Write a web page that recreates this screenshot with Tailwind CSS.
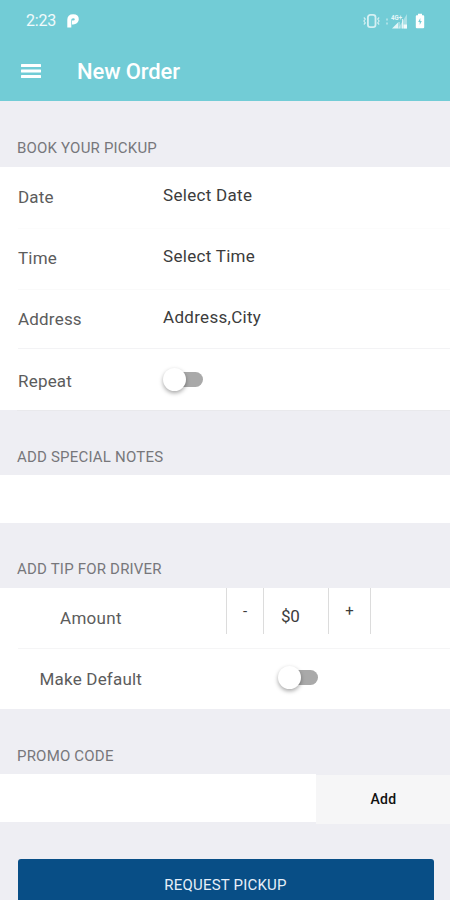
<!DOCTYPE html>
<html lang="en">
<head>
<meta charset="utf-8">
<title>New Order</title>
<script src="https://cdn.jsdelivr.net/npm/@tailwindcss/browser@4"></script>
</head>
<body class="h-[900px] w-[450px] overflow-hidden bg-[#eeeef3] font-['Roboto',sans-serif] text-[17px] leading-5 text-[#5c5c5c]">
<div class="flex h-[900px] flex-col overflow-hidden">
  <header class="h-[101px] shrink-0 bg-[#72ccd6] text-white">
    <div class="flex h-[41px] items-center pl-[26px] pr-[25px]">
      <span class="w-[41px] pt-px text-base tracking-[-0.2px] text-white/90">2:23</span>
      <svg class="h-[14px] w-[12px]" viewBox="0 0 12 14" fill="none"><path d="M2.300 13.500V5.800C2.300 3.400 4 2.200 6.200 2.200s3.600 1.200 3.600 3-1.500 3.200-3.600 3.200H5" stroke="#fff" stroke-width="4"/></svg>
      <div class="ml-auto flex items-center">
        <svg class="h-[16px] w-[17px]" viewBox="0 0 17 16" fill="none" stroke="#fff" stroke-opacity=".7"><rect x="4.900" y="1.900" width="7.600" height="12.200" rx="2.400" stroke-width="1.800"/><path d="M.8 4.500 2.300 6 .9 8l1.400 2L.8 11.500M16.200 4.500 14.700 6l1.400 2-1.400 2 1.500 1.500" stroke-width="1.100"/></svg>
        <svg class="ml-[3px] h-[16px] w-[26px]" viewBox="0 0 26 16"><path d="M3 5.500h2v2H3zM3 9.500h2v2H3z" fill="#fff" opacity=".4"/><path d="M9 15.500h6V9.500z" fill="#fff" opacity=".8"/><path d="M15 15.500h9V1z" fill="#fff" opacity=".4"/><path d="M16 15.500V9M19.500 15.500V6" stroke="#fff" stroke-opacity=".7"/><path d="M20.500 11.500h3.500v4h-3.500z" fill="#fff" opacity=".85"/><text x="8" y="6.500" font-size="7" font-weight="700" fill="#fff" fill-opacity=".85" textLength="11" lengthAdjust="spacingAndGlyphs">4G+</text></svg>
        <svg class="ml-[6px] h-[16px] w-[10px]" viewBox="0 0 10 16"><path d="M3 .8h4v1.400h1.200q1 0 1 1V14.200q0 1-1 1H1.800q-1 0-1-1V3.200q0-1 1-1H3z" fill="#fff"/><path d="M5.300 5 3.200 9h1.500v3L6.800 8H5.300z" fill="#72ccd6"/></svg>
      </div>
    </div>
    <div class="flex h-[60px] items-center pl-[21px]">
      <svg class="h-[16px] w-[20px]" viewBox="0 0 20 16" fill="#fff"><rect y="1" width="20" height="3" rx=".5"/><rect y="6.600" width="20" height="3" rx=".5"/><rect y="12.100" width="20" height="3" rx=".5"/></svg>
      <h1 class="ml-9 pt-px text-[22px] leading-[26px] font-medium tracking-[-0.1px]">New Order</h1>
    </div>
  </header>

  <h2 class="h-[66px] shrink-0 pt-[37px] pl-[17px] text-[15px] tracking-[0.2px] text-[#77777b]">BOOK YOUR PICKUP</h2>
  <section class="h-[243px] shrink-0 bg-white pl-[18px]">
    <div class="flex h-[62px] border-b border-[#fcfcfc] pt-[20px]"><span class="w-[145px] tracking-[0.2px]">Date</span><span class="-mt-0.5 tracking-[0.3px] text-[#3c3c3c]">Select Date</span></div>
    <div class="flex h-[61px] border-b border-[#fafafa] pt-[19px]"><span class="w-[145px] tracking-[0.2px]">Time</span><span class="-mt-0.5 tracking-[0.3px] text-[#3c3c3c]">Select Time</span></div>
    <div class="flex h-[59px] border-b border-[#f3f3f5] pt-[19px]"><span class="w-[145px] tracking-[0.2px]">Address</span><span class="-mt-0.5 tracking-[0.3px] text-[#3c3c3c]">Address,City</span></div>
    <div class="flex h-[61px] pt-[22px]"><span class="w-[145px] tracking-[0.2px]">Repeat</span>
      <div class="-mt-1 flex h-6 w-10 items-center"><span class="z-10 size-[23px] shrink-0 rounded-full bg-white shadow-[0_2px_4px_rgba(0,0,0,0.35)]"></span><span class="-ml-3 h-[15px] w-[29px] rounded-full bg-[#a9a9a9]"></span></div>
    </div>
  </section>

  <h2 class="h-[65px] shrink-0 pl-[17px] text-[15px] tracking-[0.2px] text-[#77777b]"><span class="block h-px bg-[#e9e9ec]"></span><span class="block pt-[36px]">ADD SPECIAL NOTES</span></h2>
  <section class="h-[48px] shrink-0 bg-white"></section>

  <h2 class="h-[65px] shrink-0 pt-[36px] pl-[17px] text-[15px] tracking-[0.2px] text-[#77777b]">ADD TIP FOR DRIVER</h2>
  <section class="h-[121px] shrink-0 bg-white pl-[18px]">
    <div class="flex h-[61px] border-b border-[#f5f5f6] pl-[42px]">
      <span class="w-[166px] pt-[20px] tracking-[0.3px]">Amount</span>
      <div class="flex h-[46px] text-[#3c3c3c]">
        <span class="w-[38px] border-x border-[#dcdcdc] pt-[13px] text-center text-[15px]">-</span>
        <span class="w-[64px] pt-[18px] pl-[17px] tracking-[-0.3px]">$0</span>
        <span class="w-[43px] border-x border-[#dcdcdc] pt-[13px] text-center text-[15px]">+</span>
      </div>
    </div>
    <div class="flex pl-[21.5px]"><span class="w-[238.5px] pt-[20px] tracking-[0.2px]">Make Default</span>
      <div class="mt-4 flex h-6 w-10 items-center"><span class="z-10 size-[23px] shrink-0 rounded-full bg-white shadow-[0_2px_4px_rgba(0,0,0,0.35)]"></span><span class="-ml-3 h-[15px] w-[29px] rounded-full bg-[#a9a9a9]"></span></div>
    </div>
  </section>

  <h2 class="h-[65px] shrink-0 pt-[37px] pl-[17px] text-[15px] tracking-[0.2px] text-[#77777b]">PROMO CODE</h2>
  <section class="flex h-[50px] shrink-0">
    <div class="h-[48px] w-[316px] bg-white"></div>
    <div class="mt-px flex h-[49px] flex-1 items-center justify-center bg-[#f6f6f7] pb-0.5 pl-px text-[14px] font-medium tracking-[0.3px] text-[#111]">Add</div>
  </section>
  <div class="mt-[35px] ml-[18px] flex h-[52px] w-[416px] shrink-0 items-center justify-center rounded-[3px] bg-[#084e86] pr-px text-[15px] tracking-[0.2px] text-[#e6eef8]">REQUEST PICKUP</div>
</div>
</body>
</html>
